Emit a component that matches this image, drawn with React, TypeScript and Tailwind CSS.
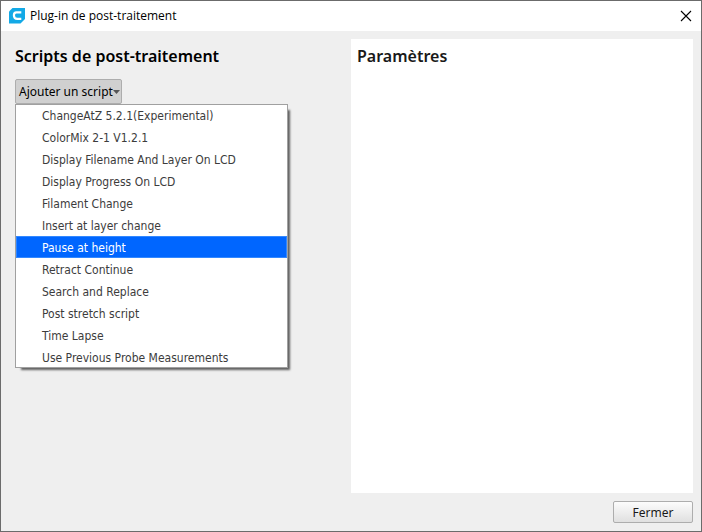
import { useState } from 'react';

const SCRIPTS = [
  'ChangeAtZ 5.2.1(Experimental)',
  'ColorMix 2-1 V1.2.1',
  'Display Filename And Layer On LCD',
  'Display Progress On LCD',
  'Filament Change',
  'Insert at layer change',
  'Pause at height',
  'Retract Continue',
  'Search and Replace',
  'Post stretch script',
  'Time Lapse',
  'Use Previous Probe Measurements',
];

function CuraLogo() {
  return (
    <svg className="w-4 h-4" viewBox="0 0 16 16" aria-hidden="true">
      <path d="M3.5 0H16v11L11.5 15.5H0V3.5z" fill="#13a9e6" />
      <path d="M12.3 4.3H7.4Q4.9 4.3 4.900 7.2Q4.9 10.9 8.300 10.9H12.3" fill="none" stroke="#fff" strokeWidth="2.2" />
    </svg>
  );
}

function TitleBar() {
  return (
    <header className="flex items-center h-[30px] pl-2 pr-[9px] bg-white">
      <CuraLogo />
      <h1 className="flex-1 pl-[5px] font-['Open_Sans',sans-serif] text-[12px] leading-4 text-black">Plug-in de post-traitement</h1>
      <button type="button" aria-label="Close">
        <svg className="w-3 h-3" viewBox="0 0 12 12" fill="none" stroke="#000" strokeWidth="1.1">
          <path d="M1 1l10 10M11 1L1 11" />
        </svg>
      </button>
    </header>
  );
}

function ScriptMenu({ selected, onSelect }: { selected: string; onSelect: (s: string) => void }) {
  return (
    <ul
      role="menu"
      className="absolute left-0 top-full w-[273px] border border-[#a0a0a0] bg-white font-['DejaVu_Sans_Condensed','DejaVu_Sans',sans-serif] shadow-[4px_4px_2px_-2px_rgba(0,0,0,0.6)]"
    >
      {SCRIPTS.map(s => (
        <li key={s} role="none" className="h-[22px] first:-mt-px last:-mb-px">
          <button
            type="button"
            role="menuitem"
            onClick={() => onSelect(s)}
            className={`block w-full h-full pt-1 pb-[2px] pl-[26px] text-left text-[12px] leading-4 whitespace-nowrap ${s === selected ? 'bg-[#0066ff] inset-ring inset-ring-[#3388ff] text-white' : 'text-[#3c3c3c]'}`}
          >
            {s}
          </button>
        </li>
      ))}
    </ul>
  );
}

export default function App() {
  const [open, setOpen] = useState(true);
  const [selected, setSelected] = useState('Pause at height');

  return (
    <div className="flex flex-col min-h-screen border border-[#6b6b6b] bg-[#efefef] font-['Noto_Sans',sans-serif]">
      <TitleBar />

      <main className="flex-1 grid grid-cols-2 p-2">
        <section className="px-[6px] pt-[5px]">
          <h2 className="text-[16px] leading-6 font-semibold text-black">Scripts de post-traitement</h2>
          <div className="relative w-fit mt-[11px]">
            <button
              type="button"
              aria-haspopup="menu"
              aria-expanded={open}
              onClick={() => setOpen(!open)}
              className="flex items-center h-[25px] w-[107px] px-[3px] justify-between rounded-[2px] border border-[#adadad] bg-[#d0d0d0] text-[12px] leading-4 text-black whitespace-nowrap"
            >
              Ajouter un script
              <svg className="w-[7px] h-1 shrink-0" viewBox="0 0 7 4" aria-hidden="true">
                <path d="M0 0h7L3.5 4z" fill="#555" />
              </svg>
            </button>
            {open && <ScriptMenu selected={selected} onSelect={setSelected} />}
          </div>
        </section>

        <section className="px-[6px] pt-[5px] bg-white">
          <h2 className="text-[16px] leading-6 font-semibold text-[#191919]">Paramètres</h2>
        </section>
      </main>

      <footer className="flex justify-end px-2 pb-2">
        <button
          type="button"
          className="w-20 h-[22px] pt-px rounded-[2px] border border-[#adadad] bg-linear-to-b from-[#fcfcfc] to-[#e0e0e0] text-[12px] leading-4 text-[#191919]"
        >
          Fermer
        </button>
      </footer>
    </div>
  );
}
